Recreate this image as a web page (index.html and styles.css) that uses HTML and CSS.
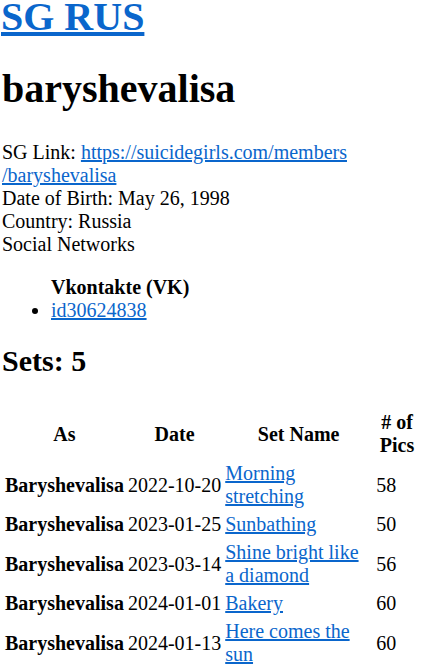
FILE: index.html
```html
<!DOCTYPE html>
<html lang="en">
<head>
    <meta charset="UTF-8">
    <meta name="viewport" content="width=device-width, initial-scale=1.0">
    <title>baryshevalisa - SG RUS</title>
    <link rel="stylesheet" href="styles.css">
</head>
<body>
    <header class="site-header">
        <a href="#" class="site-title">SG RUS</a>
    </header>

    <h1 class="model-name">baryshevalisa</h1>

    <div class="model-info">
        SG Link: <a href="#">https://suicidegirls.com/members<wbr>/baryshevalisa</a><br>
        Date of Birth: May 26, 1998<br>
        Country: Russia<br>
        Social Networks
        <ul class="socials">
            <li class="socials-head">Vkontakte (VK)</li>
            <li><a href="#">id30624838</a></li>
        </ul>
    </div>

    <h2 class="sets-title">Sets: 5</h2>

    <table class="sets">
        <thead>
            <tr>
                <th>As</th>
                <th>Date</th>
                <th class="col-name">Set Name</th>
                <th class="col-pics"># of Pics</th>
            </tr>
        </thead>
        <tbody>
            <tr>
                <th>Baryshevalisa</th>
                <td class="date">2022-10-20</td>
                <td><a href="#">Morning stretching</a></td>
                <td>58</td>
            </tr>
            <tr>
                <th>Baryshevalisa</th>
                <td class="date">2023-01-25</td>
                <td><a href="#">Sunbathing</a></td>
                <td>50</td>
            </tr>
            <tr>
                <th>Baryshevalisa</th>
                <td class="date">2023-03-14</td>
                <td><a href="#">Shine bright like a diamond</a></td>
                <td>56</td>
            </tr>
            <tr>
                <th>Baryshevalisa</th>
                <td class="date">2024-01-01</td>
                <td><a href="#">Bakery</a></td>
                <td>60</td>
            </tr>
            <tr>
                <th>Baryshevalisa</th>
                <td class="date">2024-01-13</td>
                <td><a href="#">Here comes the sun</a></td>
                <td>60</td>
            </tr>
        </tbody>
    </table>
</body>
</html>
```

FILE: styles.css
```css
body {
    font-family: "Liberation Serif", "Times New Roman", serif;
    font-size: 20px;
    line-height: 23px;
    margin: 0;
    padding: 0 0 0 2px;
    color: #000;
}
a {
    color: #0a66cc;
}
.site-title {
    display: inline-block;
    margin-left: -1px;
    font-size: 40px;
    font-weight: bold;
    line-height: 34px;
}
.model-name {
    font-size: 40px;
    line-height: 46px;
    margin: 31px 0 29px;
}
.socials {
    margin: 20px 0 22px;
    padding-left: 49px;
}
.socials-head {
    list-style: none;
    font-weight: bold;
}
.sets-title {
    font-size: 30px;
    line-height: 34px;
    margin: 22px 0 30px;
}
.sets {
    width: 100%;
    border-spacing: 2px 1px;
}
.sets th, .sets td {
    padding: 2px 1px;
    text-align: left;
}
.sets thead th {
    text-align: center;
}
.sets .date {
    white-space: nowrap;
}
.sets .col-name {
    width: 148px;
}
.sets .col-pics {
    width: 42px;
}
```
